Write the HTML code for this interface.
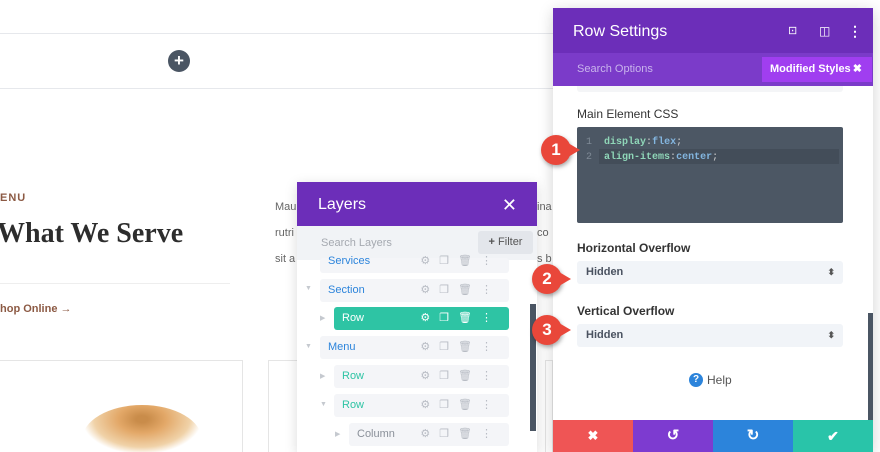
<!DOCTYPE html>
<html><head><style>
*{margin:0;padding:0;box-sizing:border-box}
html,body{width:880px;height:452px;overflow:hidden}
body{background:#fff;font-family:"Liberation Sans",sans-serif;position:relative}
.a{position:absolute}
.row{position:absolute;height:23px;background:#f4f5f8;border-radius:3px;font-size:11px;line-height:23px;padding-left:8px}
.ic{position:absolute;right:8px;top:0;color:#b8bcc4;font-size:11px;letter-spacing:9px}
.tri{position:absolute;font-size:7px;color:#c5c9cf}
.sel{position:absolute;left:577px;width:266px;height:23px;background:#f1f4f8;border-radius:3px;font-size:11px;line-height:23px;padding-left:9px;color:#4a5260;font-weight:bold}
.sel:after{content:"⬍";position:absolute;right:8px;font-size:9px;color:#555}
.lbl{position:absolute;left:577px;font-size:12px;color:#333;font-weight:bold}
.call{position:absolute;width:30px;height:30px;border-radius:50%;background:#e9473a;color:#fff;font-weight:bold;font-size:17px;text-align:center;line-height:30px;box-shadow:1px 2px 4px rgba(0,0,0,.35)}
.call:after{content:"";position:absolute;right:-9px;top:8px;border-left:12px solid #e9473a;border-top:7px solid transparent;border-bottom:7px solid transparent}
</style></head><body>
<div class="a" style="left:0;top:33px;width:553px;height:1px;background:#e6e8ec"></div>
<div class="a" style="left:0;top:88px;width:553px;height:1px;background:#e6e8ec"></div>
<div class="a" style="left:168px;top:50px;width:22px;height:22px;border-radius:50%;background:#4a5563;color:#fff;text-align:center;line-height:21px;font-size:17px;font-weight:bold">+</div>
<div class="a" style="left:0;top:192px;font-size:11px;font-weight:bold;color:#8c5a44;letter-spacing:1px">ENU</div>
<div class="a" style="left:-3px;top:218px;font-family:'Liberation Serif',serif;font-size:28px;font-weight:bold;color:#2d2d2d">What We Serve</div>
<div class="a" style="left:0;top:283px;width:230px;height:1px;background:#eee"></div>
<div class="a" style="left:0;top:303px;font-size:11px;font-weight:bold;color:#8c5a44">hop Online →</div>
<div class="a" style="left:-1px;top:360px;width:244px;height:92px;border:1px solid #e5e5e5;border-bottom:none"></div>
<div class="a" style="left:82px;top:405px;width:120px;height:47px;border-radius:60px 60px 0 0/35px 35px 0 0;background:radial-gradient(ellipse 60px 35px at 50% 30%,#c98c4a 10%,#e3a868 40%,#f0d2a8 80%,#fff 100%)"></div>
<div class="a" style="left:268px;top:360px;width:40px;height:92px;border:1px solid #e5e5e5;border-bottom:none"></div>
<div class="a" style="left:275px;top:194px;font-size:11px;color:#666;line-height:26px">Mau<br>rutri<br>sit a</div>
<div class="a" style="left:537px;top:194px;font-size:11px;color:#666;line-height:26px">ina<br>co<br>s b</div>
<div class="a" style="left:545px;top:360px;width:8px;height:92px;border:1px solid #e5e5e5;border-bottom:none"></div>
<!-- Layers -->
<div class="a" style="left:297px;top:182px;width:240px;height:270px;background:#fff;box-shadow:0 3px 12px rgba(0,0,0,.15)">
 <div class="a" style="left:0;top:0;width:240px;height:44px;background:#6c2eb9;color:#fff;font-size:16px;line-height:46px;padding-left:21px">Layers<span style="position:absolute;right:20px;font-size:18px">✕</span></div>
 <div class="a" style="left:0;top:44px;width:240px;height:34px;background:#f1f3f6"></div>
 <div class="a" style="left:24px;top:55px;font-size:11px;color:#a5a9b0">Search Layers</div>
 <div class="a" style="left:181px;top:49px;width:55px;height:23px;background:#e3e6eb;border-radius:3px;font-size:11px;color:#555;line-height:23px;text-align:center"><b>+</b> Filter</div>
 <div class="a" style="left:233px;top:122px;width:6px;height:127px;background:#4a5563"></div>
</div>
<div class="row" style="left:320px;top:258px;width:189px;height:15px;line-height:6px;color:#2c84db">Services<span class="ic" style="line-height:6px">⚙❐🗑⋮</span></div>
<div class="row" style="left:320px;top:279px;width:189px;color:#2c84db">Section<span class="ic">⚙❐🗑⋮</span></div>
<div class="tri" style="left:305px;top:285px">▼</div>
<div class="row" style="left:334px;top:307px;width:175px;background:#2ec4a4;color:#fff">Row<span class="ic" style="color:#fff">⚙❐🗑⋮</span></div>
<div class="tri" style="left:320px;top:314px">▶</div>
<div class="row" style="left:320px;top:336px;width:189px;color:#2c84db">Menu<span class="ic">⚙❐🗑⋮</span></div>
<div class="tri" style="left:305px;top:343px">▼</div>
<div class="row" style="left:334px;top:365px;width:175px;color:#2ec4a4">Row<span class="ic">⚙❐🗑⋮</span></div>
<div class="tri" style="left:320px;top:372px">▶</div>
<div class="row" style="left:334px;top:394px;width:175px;color:#2ec4a4">Row<span class="ic">⚙❐🗑⋮</span></div>
<div class="tri" style="left:320px;top:401px">▼</div>
<div class="row" style="left:349px;top:423px;width:160px;color:#8a9099">Column<span class="ic">⚙❐🗑⋮</span></div>
<div class="tri" style="left:335px;top:430px">▶</div>
<!-- Row Settings -->
<div class="a" style="left:553px;top:8px;width:320px;height:444px;background:#fff;box-shadow:0 3px 14px rgba(0,0,0,.18)">
 <div class="a" style="left:0;top:0;width:320px;height:45px;background:#6c2eb9;color:#fff;font-size:16px;line-height:47px;padding-left:20px">Row Settings
  <span style="position:absolute;left:235px;top:0;font-size:11px">⊡</span><span style="position:absolute;left:266px;font-size:12px">◫</span><span style="position:absolute;left:295px;font-size:14px;font-weight:bold">⋮</span></div>
 <div class="a" style="left:0;top:45px;width:320px;height:33px;background:#7b3bc9;color:#c9b4ec;font-size:11px;line-height:33px;padding-left:24px">Search Options</div>
 <div class="a" style="left:209px;top:49px;width:110px;height:25px;background:#a03ef0;color:#fff;font-size:11px;line-height:25px;padding-left:8px;font-weight:bold">Modified Styles <span style="position:absolute;right:10px">✖</span></div>
 <div class="a" style="left:24px;top:78px;width:266px;height:6px;background:#f4f5f7;border-radius:0 0 3px 3px"></div>
 <div class="a" style="left:315px;top:305px;width:5px;height:107px;background:#4a5563"></div>
 <div class="a" style="left:0;top:412px;width:80px;height:32px;background:#ef5555;color:#fff;text-align:center;line-height:32px;font-weight:bold;font-size:13px">✖</div>
 <div class="a" style="left:80px;top:412px;width:80px;height:32px;background:#7d3bd0;color:#fff;text-align:center;line-height:32px;font-weight:bold;font-size:15px">↺</div>
 <div class="a" style="left:160px;top:412px;width:80px;height:32px;background:#2c84db;color:#fff;text-align:center;line-height:32px;font-weight:bold;font-size:15px">↻</div>
 <div class="a" style="left:240px;top:412px;width:80px;height:32px;background:#29c4a9;color:#fff;text-align:center;line-height:32px;font-weight:bold;font-size:14px">✔</div>
</div>
<div class="lbl" style="top:107px;font-weight:normal;color:#333">Main Element CSS</div>
<div class="a" style="left:577px;top:127px;width:266px;height:96px;background:#4c5764;border-radius:2px;font-family:'Liberation Mono',monospace;font-size:10px;line-height:15px;padding-top:8px">
 <div style="position:absolute;left:22px;top:22px;width:240px;height:15px;background:#434d59"></div>
 <div style="position:relative;padding-left:9px"><span style="color:#7f8a96">1</span>&nbsp;&nbsp;<b style="color:#8fd6b8">display</b><span style="color:#ccc">:</span><b style="color:#83b6e0">flex</b><span style="color:#ccc">;</span></div>
 <div style="position:relative;padding-left:9px"><span style="color:#7f8a96">2</span>&nbsp;&nbsp;<b style="color:#8fd6b8">align-items</b><span style="color:#ccc">:</span><b style="color:#83b6e0">center</b><span style="color:#ccc">;</span></div>
</div>
<div class="lbl" style="top:241px">Horizontal Overflow</div>
<div class="sel" style="top:261px">Hidden</div>
<div class="lbl" style="top:304px">Vertical Overflow</div>
<div class="sel" style="top:324px">Hidden</div>
<div class="a" style="left:689px;top:373px;width:14px;height:14px;border-radius:50%;background:#2c84db;color:#fff;font-size:10px;font-weight:bold;text-align:center;line-height:14px">?</div>
<div class="a" style="left:707px;top:373px;font-size:12px;color:#555">Help</div>
<div class="call" style="left:541px;top:135px">1</div>
<div class="call" style="left:532px;top:264px">2</div>
<div class="call" style="left:532px;top:315px">3</div>
</body></html>
